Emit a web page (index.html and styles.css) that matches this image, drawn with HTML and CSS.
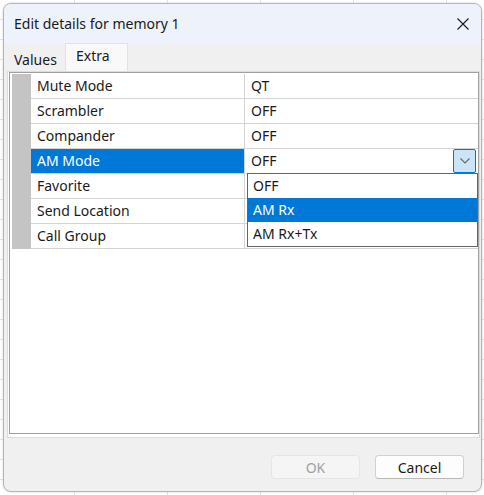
FILE: index.html
```html
<!DOCTYPE html>
<html>
<head>
<meta charset="utf-8">
<link rel="stylesheet" href="styles.css">
</head>
<body>
<div class="window">
  <div class="titlebar">
    <span class="title">Edit details for memory 1</span>
    <svg class="close" width="12" height="12" viewBox="0 0 12 12"><path d="M0.5 0.5 L11.5 11.5 M11.5 0.5 L0.5 11.5" stroke="#1a1a1a" stroke-width="1.1" fill="none"/></svg>
  </div>
  <div class="body">
    <div class="tabs">
      <div class="tab">Values</div>
      <div class="tab active">Extra</div>
    </div>
    <div class="panel">
      <div class="grid">
        <div class="row"><div class="rh"></div><div class="name">Mute Mode</div><div class="val">QT</div></div>
        <div class="row"><div class="rh"></div><div class="name">Scrambler</div><div class="val">OFF</div></div>
        <div class="row"><div class="rh"></div><div class="name">Compander</div><div class="val">OFF</div></div>
        <div class="row"><div class="rh"></div><div class="name sel">AM Mode</div><div class="val combo"><span>OFF</span><span class="dd"><svg width="10" height="6" viewBox="0 0 10 6"><path d="M0.5 0.5 L5 5 L9.5 0.5" stroke="#6a6a6a" stroke-width="1.1" fill="none"/></svg></span>
          <div class="list">
            <div class="item">OFF</div>
            <div class="item hl">AM Rx</div>
            <div class="item">AM Rx+Tx</div>
          </div>
        </div></div>
        <div class="row"><div class="rh"></div><div class="name">Favorite</div><div class="val"></div></div>
        <div class="row"><div class="rh"></div><div class="name">Send Location</div><div class="val"></div></div>
        <div class="row"><div class="rh"></div><div class="name">Call Group</div><div class="val"></div></div>
      </div>
    </div>
    <div class="buttons">
      <button class="btn disabled">OK</button>
      <button class="btn">Cancel</button>
    </div>
  </div>
</div>
</body>
</html>
```
FILE: styles.css
```css
html, body {
  margin: 0;
  padding: 0;
}
body {
  width: 484px;
  height: 495px;
  background-color: #ffffff;
  background-image:
    repeating-linear-gradient(to right, transparent 0, transparent 74px, #e4e4e4 74px, #e4e4e4 75px, transparent 75px, transparent 93px),
    repeating-linear-gradient(to bottom, transparent 0, transparent 19px, #e4e4e4 19px, #e4e4e4 20px);
  font-family: "Noto Sans", "Open Sans", sans-serif;
  overflow: hidden;
}
.window {
  position: relative;
  margin: 3px 0 0 3px;
  width: 477px;
  height: 487px;
  border: 1px solid #b4b4b4;
  border-radius: 8px;
  background: #f0f0f0;
  box-shadow: 0 0 3px rgba(0,0,0,0.15);
  overflow: hidden;
  display: flex;
  flex-direction: column;
}
.titlebar {
  height: 39px;
  flex: none;
  background: #eef2fa;
  display: flex;
  align-items: center;
  justify-content: space-between;
  padding: 0 12px 0 10px;
}
.title {
  font-size: 14px;
  color: #1a1a1a;
}
.close {
  display: block;
}
.body {
  flex: 1;
  display: flex;
  flex-direction: column;
  padding: 0 1px 0 3px;
}
.tabs {
  display: flex;
  align-items: flex-end;
  height: 28px;
  padding-left: 3px;
}
.tab {
  font-size: 14px;
  color: #1a1a1a;
  height: 23px;
  line-height: 23px;
  padding: 0 4px;
  width: 47px;
}
.tab.active {
  height: 28px;
  line-height: 24px;
  width: 63px;
  box-sizing: border-box;
  padding-left: 10px;
  background: #f9f9f9;
  border: 1px solid #e2e2e2;
  border-bottom: none;
}
.panel {
  height: 367px;
  flex: none;
  border: 1px solid #dcdcdc;
  background: #ffffff;
  padding: 0 0 3px 1px;
  box-sizing: border-box;
}
.grid {
  height: 100%;
  box-sizing: border-box;
  border: 1px solid #a0a0a0;
  padding: 1px 0 0 2px;
  display: flex;
  flex-direction: column;
}
.row {
  display: flex;
  height: 25px;
  flex: none;
}
.rh {
  width: 19px;
  flex: none;
  background: #c4c4c4;
}
.name, .val {
  box-sizing: border-box;
  height: 25px;
  border-bottom: 1px solid #d4d4d4;
  font-size: 14px;
  color: #1a1a1a;
  line-height: 24px;
  white-space: nowrap;
}
.name {
  width: 214px;
  flex: none;
  border-right: 1px solid #d4d4d4;
  padding-left: 6px;
}
.name.sel {
  background: #0078d7;
  color: #ffffff;
}
.val {
  flex: 1;
  padding-left: 6px;
}
.combo {
  position: relative;
  display: flex;
  justify-content: space-between;
  padding-right: 2px;
}
.dd {
  width: 23px;
  height: 24px;
  box-sizing: border-box;
  border: 1px solid #0078d7;
  border-radius: 2px;
  background: #cce4f7;
  display: flex;
  align-items: center;
  justify-content: center;
}
.dd svg {
  display: block;
}
.list {
  position: absolute;
  left: 2px;
  top: 24px;
  width: 231px;
  box-sizing: border-box;
  border: 1px solid #646464;
  background: #ffffff;
  z-index: 2;
}
.item {
  height: 24px;
  line-height: 24px;
  padding-left: 5px;
  font-size: 14px;
  color: #1a1a1a;
}
.item.hl {
  background: #0078d7;
  color: #ffffff;
}
.buttons {
  display: flex;
  justify-content: flex-end;
  gap: 15px;
  padding: 17px 16px 0 0;
}
.btn {
  width: 89px;
  height: 24px;
  box-sizing: border-box;
  border: 1px solid #d0d0d0;
  border-bottom-color: #b8b8b8;
  border-radius: 4px;
  background: #fdfdfd;
  font-family: "Noto Sans", "Open Sans", sans-serif;
  font-size: 14px;
  color: #1a1a1a;
  padding: 0;
}
.btn.disabled {
  background: #f5f5f5;
  border-color: #e5e5e5;
  color: #a0a0a0;
}
```
